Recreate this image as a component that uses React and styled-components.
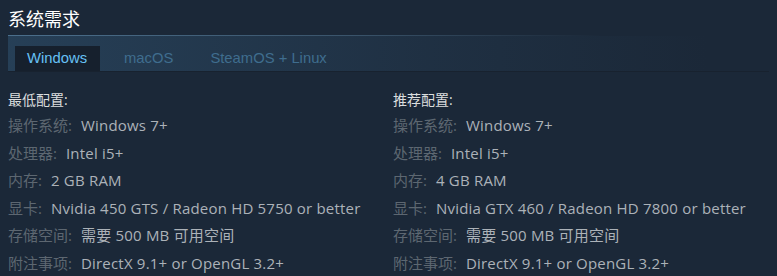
import styled, { createGlobalStyle } from "styled-components";

const GlobalStyle = createGlobalStyle`
  body {
    margin: 0;
    background: #1b2838;
    font-family: "Open Sans", "Noto Sans CJK SC", sans-serif;
  }
`;

const Page = styled.div`
  width: 777px;
  height: 276px;
  padding: 0 8px;
  box-sizing: border-box;
  background: #1b2838;
  overflow: hidden;
`;

const Title = styled.h2`
  margin: 0;
  padding-top: 6px;
  height: 29px;
  font-size: 18px;
  font-weight: 400;
  line-height: 26px;
  color: #ffffff;
  border-bottom: 1px solid;
  border-image: linear-gradient(to right, #4b6f8c 0%, #3a546b 45%, rgba(27, 40, 56, 0) 78%) 1;
`;

const TabBar = styled.div`
  display: flex;
  align-items: flex-end;
  gap: 12px;
  height: 35px;
  padding-left: 7px;
  background: linear-gradient(to right, rgba(42, 71, 97, 0.75) 0%, rgba(36, 58, 80, 0.45) 55%, rgba(27, 40, 56, 0) 92%);
  border-bottom: 1px solid #18222f;
`;

const Tab = styled.div`
  height: 25px;
  padding: 0 13px 0 12px;
  font-family: "Liberation Sans", "Noto Sans CJK SC", sans-serif;
  font-size: 14.8px;
  line-height: 25px;
  color: ${(p) => (p.active ? "#67c1f5" : "#3f6d8e")};
  background: ${(p) => (p.active ? "#16202d" : "transparent")};
`;

const Columns = styled.div`
  display: grid;
  grid-template-columns: 1fr 1fr;
  column-gap: 9px;
  padding-top: 16px;
`;

const Heading = styled.div`
  font-size: 14px;
  line-height: 24px;
  color: #dcdedf;
`;

const Row = styled.div`
  font-size: 15px;
  line-height: 27.5px;
  letter-spacing: 0.2px;
  color: #acb2b8;
  white-space: nowrap;
`;

const Label = styled.span`
  color: #5d6771;
  margin-right: 9px;
  letter-spacing: 0;
`;

const minimum = [
  ["操作系统:", "Windows 7+"],
  ["处理器:", "Intel i5+"],
  ["内存:", "2 GB RAM"],
  ["显卡:", "Nvidia 450 GTS / Radeon HD 5750 or better"],
  ["存储空间:", "需要 500 MB 可用空间"],
  ["附注事项:", "DirectX 9.1+ or OpenGL 3.2+"],
];

const recommended = [
  ["操作系统:", "Windows 7+"],
  ["处理器:", "Intel i5+"],
  ["内存:", "4 GB RAM"],
  ["显卡:", "Nvidia GTX 460 / Radeon HD 7800 or better"],
  ["存储空间:", "需要 500 MB 可用空间"],
  ["附注事项:", "DirectX 9.1+ or OpenGL 3.2+"],
];

function Specs({ title, rows }) {
  return (
    <div>
      <Heading>{title}</Heading>
      {rows.map(([label, value]) => (
        <Row key={label}>
          <Label>{label}</Label>
          {value}
        </Row>
      ))}
    </div>
  );
}

export default function App() {
  return (
    <Page>
      <GlobalStyle />
      <Title>系统需求</Title>
      <TabBar>
        <Tab active>Windows</Tab>
        <Tab>macOS</Tab>
        <Tab>SteamOS + Linux</Tab>
      </TabBar>
      <Columns>
        <Specs title="最低配置:" rows={minimum} />
        <Specs title="推荐配置:" rows={recommended} />
      </Columns>
    </Page>
  );
}
